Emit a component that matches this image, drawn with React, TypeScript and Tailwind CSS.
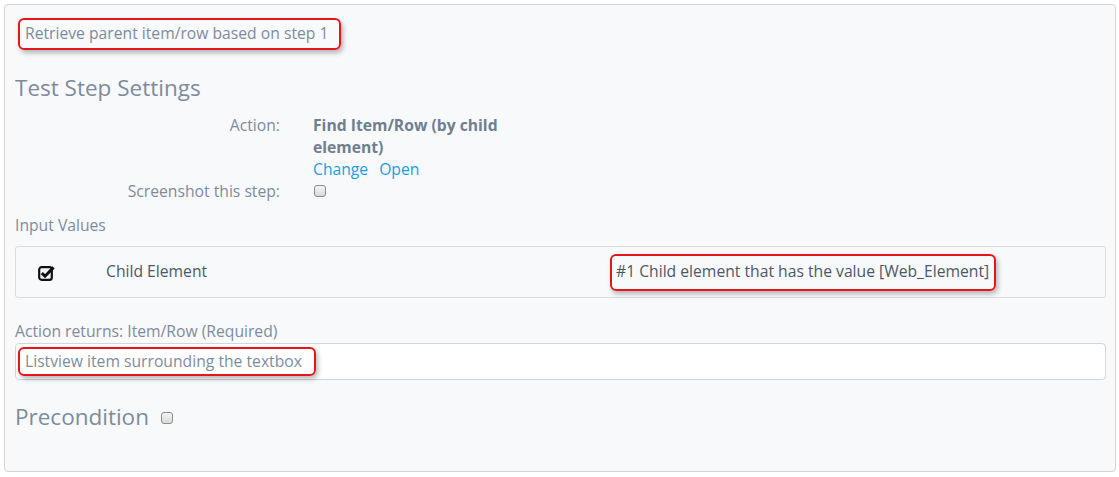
import type { ReactNode } from 'react'

function Callout({ children, className = '' }: { children: ReactNode; className?: string }) {
  return (
    <span
      className={`inline-flex items-center whitespace-nowrap border-2 border-[#e8141a] rounded-[6px] shadow-[2px_3px_5px_rgba(0,0,0,0.28)] ${className}`}
    >
      {children}
    </span>
  )
}

function Checkbox({ className = '' }: { className?: string }) {
  return (
    <span
      className={`inline-block w-[12px] h-[12px] rounded-[3px] border border-[#8c8c8c] bg-gradient-to-b from-[#f4f4f4] to-[#d9d9d9] ${className}`}
    />
  )
}

function CheckSquareIcon() {
  return (
    <svg width="18" height="16" viewBox="0 0 18 16">
      <rect x="1.2" y="2.2" width="12.6" height="12.6" rx="2.4" fill="none" stroke="#111" strokeWidth="2.2" />
      <path d="M3.8 8.2 L7 11.2 L15.6 2.4" fill="none" stroke="#111" strokeWidth="3" strokeLinejoin="miter" />
    </svg>
  )
}

export default function App() {
  return (
    <div className="w-[1119px] h-[477px] bg-white p-[4px] font-['Open_Sans',sans-serif] text-[15.7px] text-[#7d8c9c]">
      <div className="h-[468px] w-[1112px] bg-[#f8f9fb] border border-[#d3d3d3] rounded-[4px] pl-[10px] pr-[9px] pt-[13px]">
        {/* Step name */}
        <Callout className="ml-[3px] h-[32px] w-[323px] pl-[5px]">
          <span className="leading-none">Retrieve parent item/row based on step 1</span>
        </Callout>

        {/* Settings */}
        <h2 className="mt-[23px] text-[22.5px] leading-[30px] text-[#7d8c9c]">Test Step Settings</h2>

        <div className="mt-[11px] grid grid-cols-[265px_205px] gap-x-[33px] leading-[22px]">
          <div className="text-right">Action:</div>
          <div>
            <div className="font-bold text-[#6f7f90]">Find Item/Row (by child element)</div>
            <div className="flex gap-[11px] text-[#1a9ee0]">
              <span>Change</span>
              <span>Open</span>
            </div>
          </div>
          <div className="text-right">Screenshot this step:</div>
          <div className="flex items-center pl-[1px]">
            <Checkbox />
          </div>
        </div>

        <div className="mt-[12px] leading-[22px]">Input Values</div>

        <div className="mt-[10px] h-[52px] w-[1091px] bg-[#f8f9fb] border border-[#dcdcdc] rounded-[3px] flex items-center">
          <div className="w-[90px] pl-[22px] pt-[2px]">
            <CheckSquareIcon />
          </div>
          <div className="w-[504px] text-[#4c5866]">Child Element</div>
          <Callout className="h-[37px] w-[386px] pl-[4px] text-[#4c5866]">
            <span>#1 Child element that has the value [Web_Element]</span>
          </Callout>
        </div>

        <div className="mt-[22px] leading-[22px]">Action returns: Item/Row (Required)</div>

        <div className="mt-[1px] h-[37px] w-[1091px] bg-white border border-[#d6d6d6] rounded-[4px] flex items-center pl-[2px]">
          <Callout className="h-[29px] w-[298px] pl-[5px]">
            <span>Listview item surrounding the textbox</span>
          </Callout>
        </div>

        <div className="mt-[22px] flex items-center gap-[12px]">
          <span className="text-[22.5px] leading-[30px]">Precondition</span>
          <Checkbox className="mt-[1px]" />
        </div>
      </div>
    </div>
  )
}
